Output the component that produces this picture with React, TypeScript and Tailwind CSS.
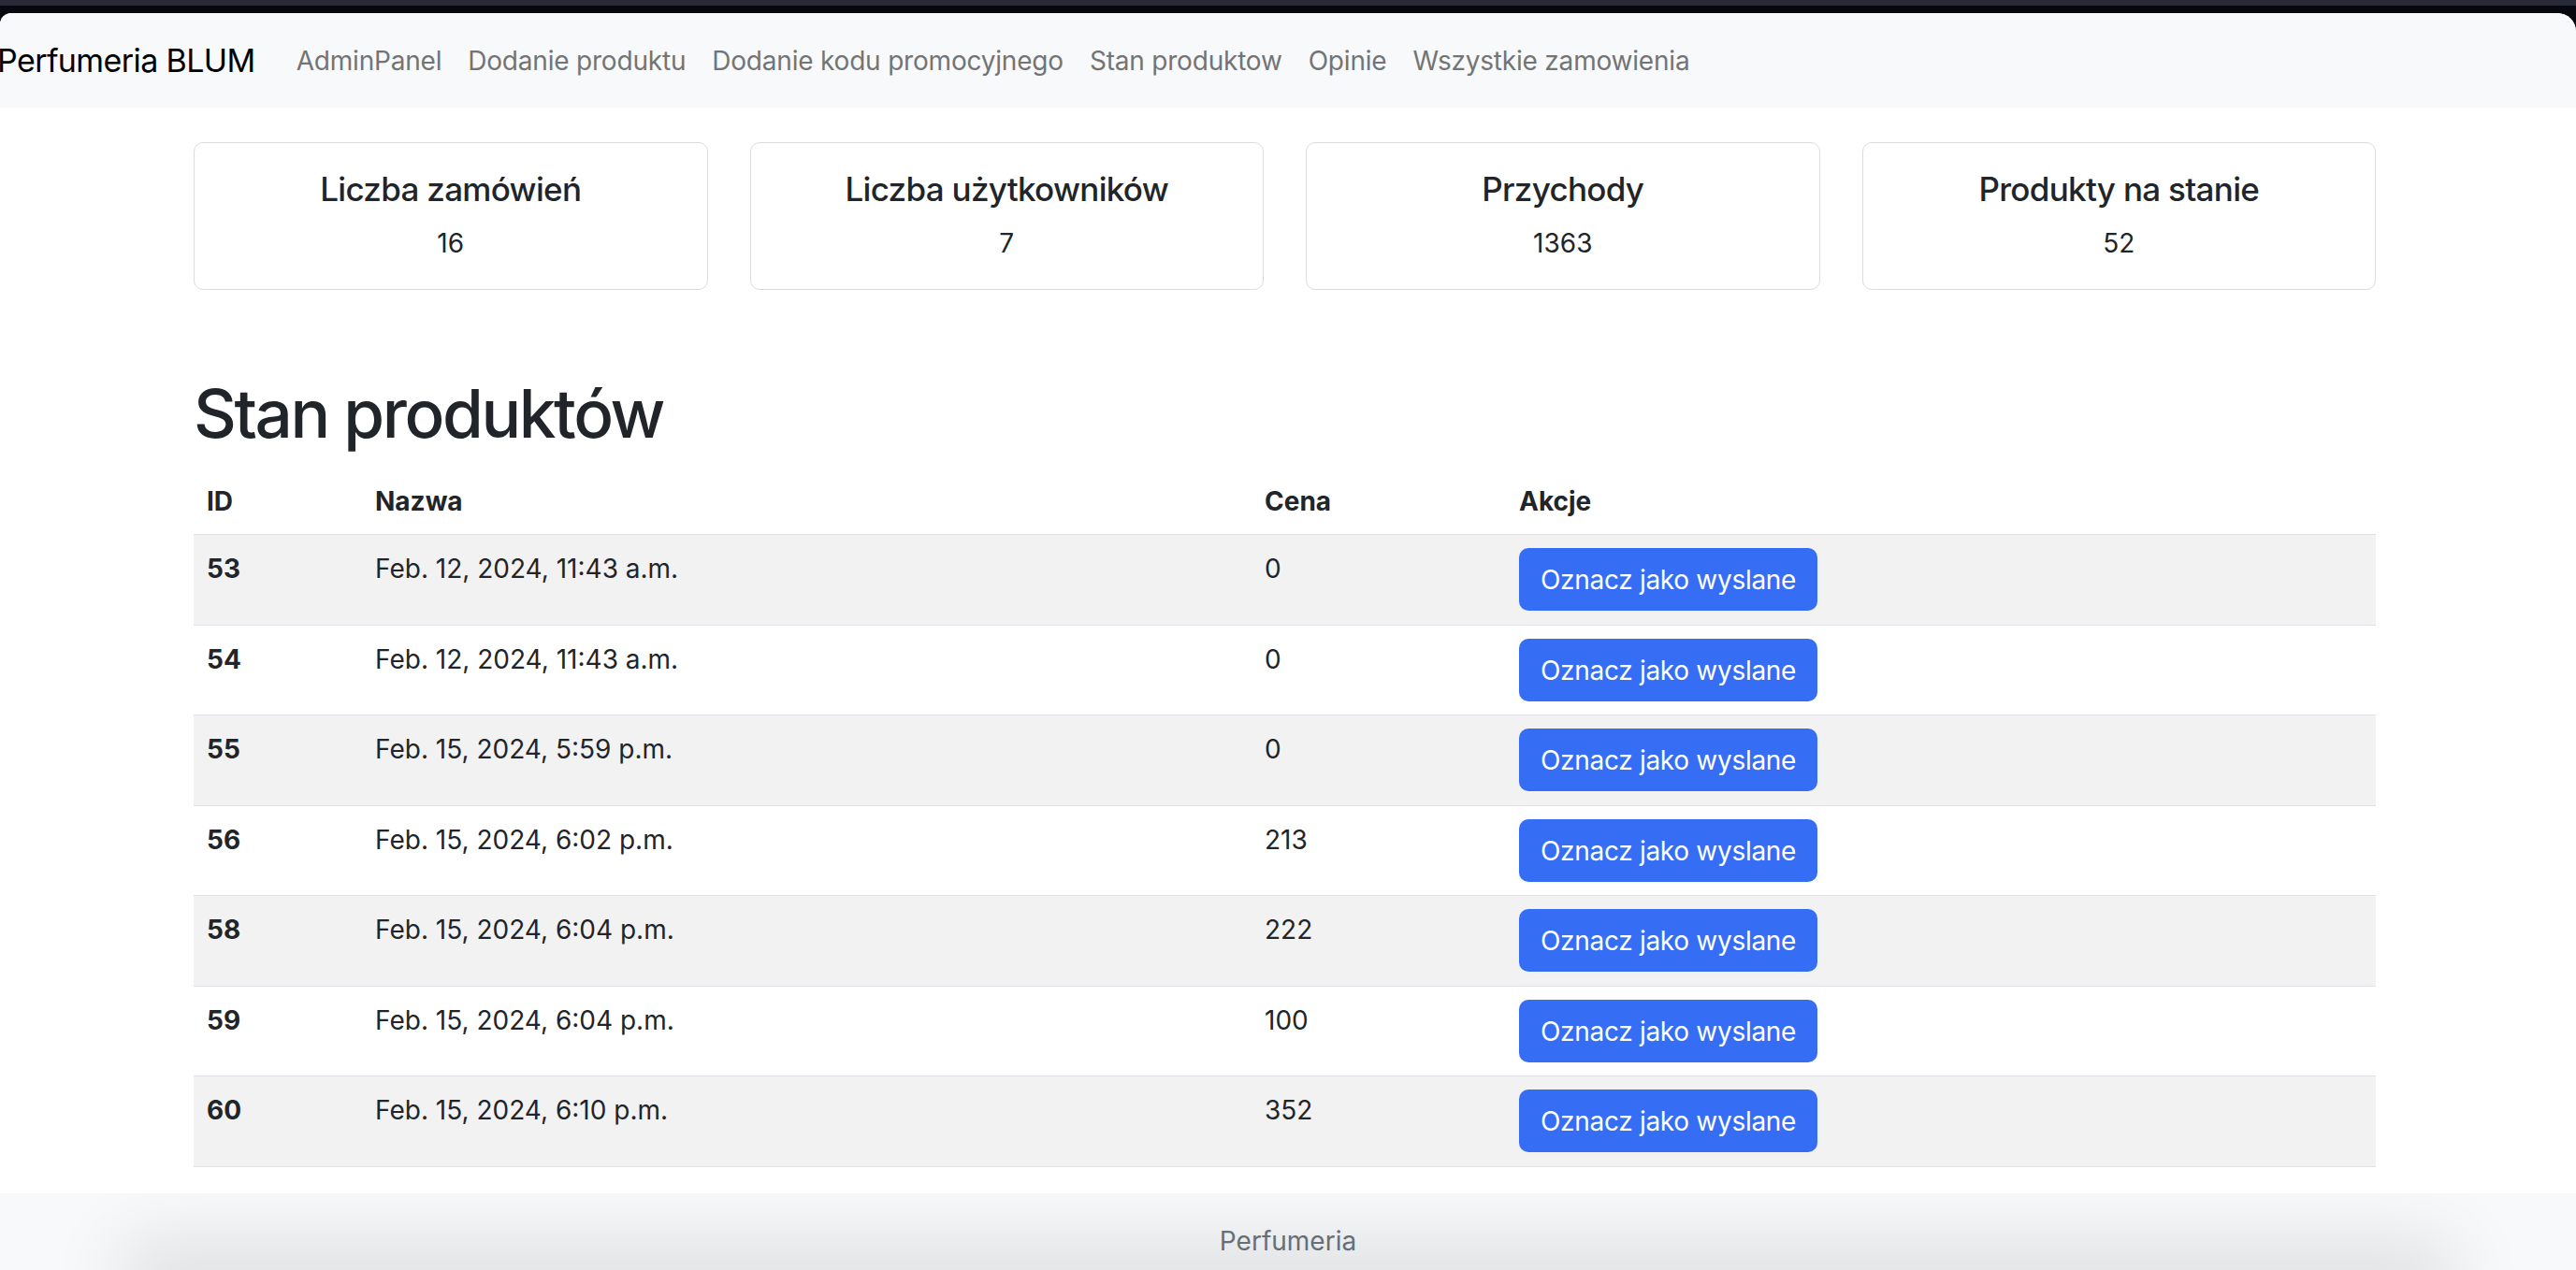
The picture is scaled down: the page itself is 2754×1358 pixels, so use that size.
const navLinks = [
  "AdminPanel",
  "Dodanie produktu",
  "Dodanie kodu promocyjnego",
  "Stan produktow",
  "Opinie",
  "Wszystkie zamowienia",
];

const stats = [
  { title: "Liczba zamówień", value: "16" },
  { title: "Liczba użytkowników", value: "7" },
  { title: "Przychody", value: "1363" },
  { title: "Produkty na stanie", value: "52" },
];

const products = [
  { id: 53, name: "Feb. 12, 2024, 11:43 a.m.", price: 0 },
  { id: 54, name: "Feb. 12, 2024, 11:43 a.m.", price: 0 },
  { id: 55, name: "Feb. 15, 2024, 5:59 p.m.", price: 0 },
  { id: 56, name: "Feb. 15, 2024, 6:02 p.m.", price: 213 },
  { id: 58, name: "Feb. 15, 2024, 6:04 p.m.", price: 222 },
  { id: 59, name: "Feb. 15, 2024, 6:04 p.m.", price: 100 },
  { id: 60, name: "Feb. 15, 2024, 6:10 p.m.", price: 352 },
];

export default function App() {
  return (
    <div className="h-[1358px] w-full overflow-hidden bg-[#06070f] flex flex-col font-['Inter',sans-serif] text-[#212529]">
      {/* window chrome strip */}
      <div className="h-[6px] bg-[#282b37]" />
      <div className="h-[8px]" />

      <div className="flex-1 flex flex-col bg-white rounded-tl-[12px] rounded-tr-[20px] overflow-hidden">
        {/* Navbar */}
        <nav className="h-[101px] shrink-0 bg-[#f8f9fa] flex items-center">
          <span className="ml-[-3px] text-[34px] leading-[52px] tracking-[-0.6px] text-black whitespace-nowrap">
            Perfumeria BLUM
          </span>
          <ul className="flex items-center ml-[30px]">
            {navLinks.map((link) => (
              <li key={link}>
                <a className="px-[14px] text-[28px] leading-[42px] tracking-[-0.2px] text-[#737475] whitespace-nowrap">
                  {link}
                </a>
              </li>
            ))}
          </ul>
        </nav>

        {/* Main content */}
        <main className="w-[2333px] ml-[207px] shrink-0">
          <div className="grid grid-cols-4 gap-x-[45px] mt-[37px]">
            {stats.map((s) => (
              <div
                key={s.title}
                className="h-[158px] border border-[#dcdcdc] rounded-[10px] flex flex-col items-center pt-[28px]"
              >
                <h5 className="text-[35px] leading-[42px] font-medium tracking-[-0.7px]">{s.title}</h5>
                <p className="mt-[16px] text-[28px] leading-[42px]">{s.value}</p>
              </div>
            ))}
          </div>

          <h1 className="mt-[89px] text-[71px] leading-[86px] font-medium tracking-[-2.4px]">Stan produktów</h1>

          <table className="mt-[16px] w-full table-fixed border-collapse text-[28px] leading-[42px]">
            <colgroup>
              <col className="w-[180px]" />
              <col className="w-[951px]" />
              <col className="w-[272px]" />
              <col />
            </colgroup>
            <thead>
              <tr className="border-b border-[#dee2e6] text-left">
                <th className="px-[14px] py-[14px] font-bold">ID</th>
                <th className="px-[14px] py-[14px] font-bold">Nazwa</th>
                <th className="px-[14px] py-[14px] font-bold">Cena</th>
                <th className="px-[14px] py-[14px] font-bold">Akcje</th>
              </tr>
            </thead>
            <tbody>
              {products.map((p, i) => (
                <tr
                  key={p.id}
                  className={`border-b border-[#dee2e6] align-top ${i % 2 === 0 ? "bg-[#f2f2f2]" : "bg-white"}`}
                >
                  <td className="px-[14px] pt-[15px] font-bold">{p.id}</td>
                  <td className="px-[14px] pt-[15px]">{p.name}</td>
                  <td className="px-[14px] pt-[15px]">{p.price}</td>
                  <td className={`px-[14px] ${i % 2 === 0 ? "pt-[14px] pb-[15px]" : "py-[14px]"}`}>
                    <button className="h-[67px] px-[23px] rounded-[10px] bg-[#356ef5] text-white text-[28px] leading-[42px] tracking-[-0.3px] whitespace-nowrap">
                      Oznacz jako wyslane
                    </button>
                  </td>
                </tr>
              ))}
            </tbody>
          </table>
        </main>

        {/* Footer */}
        <footer className="relative mt-[28px] flex-1 bg-[#f8f9fa] overflow-hidden">
          <p className="pt-[30px] text-center text-[28px] leading-[42px] text-[#6c757d]">Perfumeria</p>
          <div className="absolute left-[160px] right-[160px] top-full h-[20px] shadow-[0_0_80px_30px_rgba(0,0,0,0.11)]" />
        </footer>
      </div>
    </div>
  );
}
